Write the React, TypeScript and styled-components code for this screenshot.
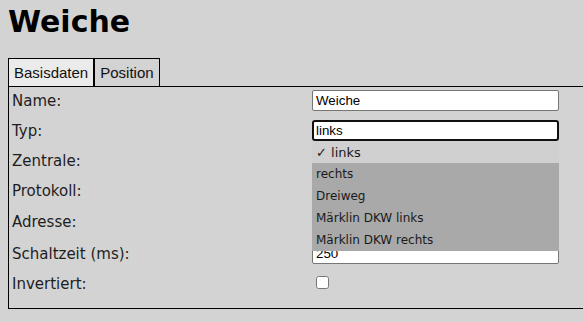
import React from "react";
import styled, { createGlobalStyle } from "styled-components";

const GlobalStyle = createGlobalStyle`
  html, body {
    margin: 0;
    padding: 0;
    overflow: hidden;
    background: #d3d3d3;
  }
`;

const Page = styled.div`
  padding: 4px 0 0 8px;
  font-family: "DejaVu Sans", Verdana, sans-serif;
  color: #1e1e1e;
`;

const Title = styled.h1`
  margin: 0 0 18px 0;
  font-size: 30px;
  line-height: 36px;
  font-weight: bold;
  color: #000;
`;

const TabBar = styled.div`
  display: flex;
  height: 28px;
`;

const Tab = styled.div<{ $active?: boolean }>`
  box-sizing: border-box;
  height: 28px;
  padding: 0 5px;
  display: flex;
  align-items: center;
  border: 1px solid #000;
  border-bottom: none;
  background: ${(p) => (p.$active ? "#ebebeb" : "#d3d3d3")};
  font-family: "Liberation Sans", Arial, sans-serif;
  font-size: 15px;
  color: #111;
`;

const Panel = styled.div`
  box-sizing: border-box;
  width: calc(100% + 20px);
  border: 1px solid #000;
  padding: 3px 4px 14px 3px;
  display: flex;
  flex-direction: column;
  gap: 9px;
`;

const Row = styled.div<{ $h?: number }>`
  position: relative;
  display: grid;
  grid-template-columns: 300px 247px;
  align-items: center;
  height: ${(p) => p.$h ?? 21}px;
`;

const Label = styled.label`
  font-size: 15px;
  line-height: 18px;
`;

const TextInput = styled.input`
  box-sizing: border-box;
  width: 247px;
  height: 21px;
  margin: 0;
  padding: 1px 3px;
  border: 1px solid #767676;
  border-radius: 2px;
  background: #fff;
  font-family: "Liberation Sans", Arial, sans-serif;
  font-size: 13.33px;
  color: #000;
  outline: none;
`;

const Select = styled.div<{ $focused?: boolean }>`
  box-sizing: border-box;
  width: 247px;
  height: 21px;
  padding: 0 2px;
  display: flex;
  align-items: center;
  background: #fff;
  border: ${(p) => (p.$focused ? "2px solid #101010" : "1px solid #767676")};
  border-radius: ${(p) => (p.$focused ? "3px" : "2px")};
  font-family: "Liberation Sans", Arial, sans-serif;
  font-size: 13.33px;
  color: #000;
`;

const Checkbox = styled.input`
  width: 13px;
  height: 13px;
  margin: 1px 0 0 4px;
`;

const OptionList = styled.ul`
  position: absolute;
  top: 21px;
  left: 300px;
  width: 247px;
  margin: 0;
  padding: 0;
  list-style: none;
  z-index: 10;
`;

const Option = styled.li<{ $selected?: boolean }>`
  height: 22px;
  padding: 0 4px;
  display: flex;
  align-items: center;
  background: ${(p) => (p.$selected ? "#d0d0d0" : "#a9a9a9")};
  font-family: "DejaVu Sans", Verdana, sans-serif;
  font-size: ${(p) => (p.$selected ? "13px" : "12px")};
  color: #1a1a1a;
  white-space: nowrap;
`;

const typen = ["links", "rechts", "Dreiweg", "Märklin DKW links", "Märklin DKW rechts"];

export default function App() {
  return (
    <Page>
      <GlobalStyle />
      <Title>Weiche</Title>
      <TabBar>
        <Tab $active>Basisdaten</Tab>
        <Tab>Position</Tab>
      </TabBar>
      <Panel>
        <Row>
          <Label>Name:</Label>
          <TextInput defaultValue="Weiche" />
        </Row>
        <Row>
          <Label>Typ:</Label>
          <Select $focused>links</Select>
          <OptionList>
            {typen.map((t, i) => (
              <Option key={t} $selected={i === 0}>
                {i === 0 ? `✓ ${t}` : t}
              </Option>
            ))}
          </OptionList>
        </Row>
        <Row>
          <Label>Zentrale:</Label>
          <Select />
        </Row>
        <Row>
          <Label>Protokoll:</Label>
          <Select />
        </Row>
        <Row $h={24}>
          <Label>Adresse:</Label>
          <TextInput />
        </Row>
        <Row>
          <Label>Schaltzeit (ms):</Label>
          <TextInput defaultValue="250" />
        </Row>
        <Row>
          <Label>Invertiert:</Label>
          <div>
            <Checkbox type="checkbox" />
          </div>
        </Row>
      </Panel>
    </Page>
  );
}
